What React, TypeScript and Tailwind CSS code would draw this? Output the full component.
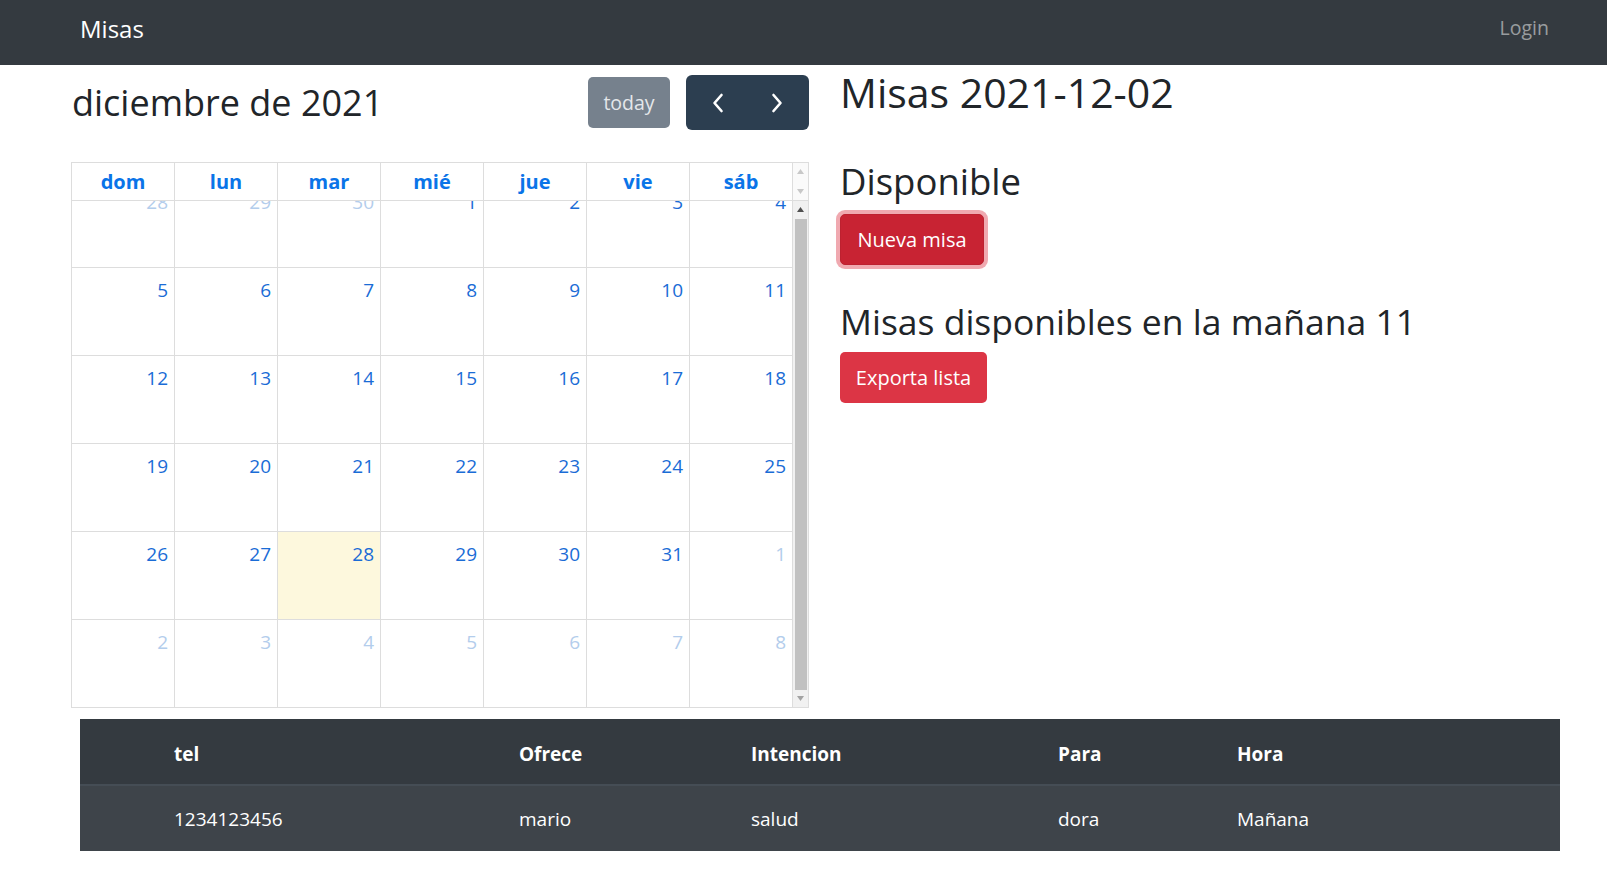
import React from 'react';

type Day = { n: number; other?: boolean; today?: boolean };

const weeks: Day[][] = [
  [{ n: 28, other: true }, { n: 29, other: true }, { n: 30, other: true }, { n: 1 }, { n: 2 }, { n: 3 }, { n: 4 }],
  [{ n: 5 }, { n: 6 }, { n: 7 }, { n: 8 }, { n: 9 }, { n: 10 }, { n: 11 }],
  [{ n: 12 }, { n: 13 }, { n: 14 }, { n: 15 }, { n: 16 }, { n: 17 }, { n: 18 }],
  [{ n: 19 }, { n: 20 }, { n: 21 }, { n: 22 }, { n: 23 }, { n: 24 }, { n: 25 }],
  [{ n: 26 }, { n: 27 }, { n: 28, today: true }, { n: 29 }, { n: 30 }, { n: 31 }, { n: 1, other: true }],
  [{ n: 2, other: true }, { n: 3, other: true }, { n: 4, other: true }, { n: 5, other: true }, { n: 6, other: true }, { n: 7, other: true }, { n: 8, other: true }],
];

const dayNames = ['dom', 'lun', 'mar', 'mié', 'jue', 'vie', 'sáb'];

const rows = [{ tel: '1234123456', ofrece: 'mario', intencion: 'salud', para: 'dora', hora: 'Mañana' }];

function Chevron({ dir }: { dir: 'left' | 'right' }) {
  return (
    <svg width="14" height="22" viewBox="0 0 14 22" fill="none">
      <path
        d={dir === 'left' ? 'M10.5 3 L3.5 11 L10.5 19' : 'M3.5 3 L10.5 11 L3.5 19'}
        stroke="white"
        strokeWidth="2.6"
        strokeLinecap="round"
        strokeLinejoin="round"
      />
    </svg>
  );
}

function Arrow({ up, tone = '#a3a3a3' }: { up?: boolean; tone?: string }) {
  return (
    <svg width="7" height="5" viewBox="0 0 7 5">
      <path d={up ? 'M0 5 L3.5 0 L7 5 Z' : 'M0 0 L3.5 5 L7 0 Z'} fill={tone} />
    </svg>
  );
}

function Calendar() {
  return (
    <div className="w-[738px]">
      <div className="mt-[10px] mb-[32px] flex h-[55px] items-center">
        <h2 className="ml-[1px] text-[36px] leading-none text-[#212529]">diciembre de 2021</h2>
        <div className="ml-auto flex items-center gap-[16px]">
          <button className="h-[51px] w-[82px] rounded-[5px] bg-[#76818d] text-[19.5px] text-[#e4e7ea]">today</button>
          <div className="flex h-[55px] w-[123px] overflow-hidden rounded-[6px] bg-[#2c3e50]">
            <button className="flex flex-1 items-center justify-center pl-[2px]">
              <Chevron dir="left" />
            </button>
            <button className="flex flex-1 items-center justify-center pr-[2px]">
              <Chevron dir="right" />
            </button>
          </div>
        </div>
      </div>

      <div className="border border-[#dddddd]">
        <div className="flex h-[38px] border-b border-[#dddddd]">
          {dayNames.map((d) => (
            <div
              key={d}
              className="flex w-[103px] items-center justify-center border-r border-[#dddddd] text-[20px] font-bold text-[#0a74e8]"
            >
              {d}
            </div>
          ))}
          <div className="flex flex-1 flex-col items-center justify-between bg-[#fafafa] py-[6px]">
            <Arrow up tone="#c8c8c8" />
            <Arrow tone="#c8c8c8" />
          </div>
        </div>

        <div className="flex h-[506px]">
          <div className="w-[721px] overflow-hidden">
            <div className="-mt-[21px]">
              {weeks.map((w, i) => (
                <div key={i} className="flex h-[88px] border-b border-[#dddddd]">
                  {w.map((d, j) => (
                    <div
                      key={j}
                      className={`w-[103px] border-r border-[#dddddd] pr-[6px] pt-[8px] text-right text-[19px] leading-[28px] ${
                        d.today ? 'bg-[#fdf8dd]' : ''
                      } ${d.other ? 'text-[#b3cdec]' : 'text-[#1a6cd6]'}`}
                    >
                      {d.n}
                    </div>
                  ))}
                </div>
              ))}
            </div>
          </div>
          <div className="flex flex-1 flex-col items-center bg-[#f1f1f1]">
            <div className="flex h-[17px] items-center">
              <Arrow up tone="#505050" />
            </div>
            <div className="mt-[1px] w-[12px] flex-1 bg-[#c1c1c1]" />
            <div className="flex h-[17px] items-center">
              <Arrow tone="#a3a3a3" />
            </div>
          </div>
        </div>
      </div>
    </div>
  );
}

export default function App() {
  return (
    <div className="min-h-screen bg-white font-['Open_Sans','Noto_Sans',sans-serif] text-[#212529]">
      <nav className="flex h-[65px] items-start justify-between bg-[#343a40] pl-[80px] pr-[58px] pt-[11px]">
        <span className="text-[24px] leading-[36px] text-white">Misas</span>
        <span className="text-[19.5px] leading-[34px] text-white/50">Login</span>
      </nav>

      <div className="flex pl-[71px]">
        <Calendar />

        <div className="ml-[31px]">
          <h1 className="text-[41px] leading-[54px] font-medium">Misas 2021-12-02</h1>
          <h2 className="mt-[40px] text-[36.5px] leading-[44px] font-medium">Disponible</h2>
          <button className="mt-[11px] h-[51px] w-[144px] rounded-[5px] border border-[#bd2130] bg-[#c82333] text-[20px] text-white shadow-[0_0_0_4px_rgba(225,83,97,0.5)]">
            Nueva misa
          </button>
          <h2 className="mt-[34px] text-[35.5px] leading-[44px] font-medium">Misas disponibles en la mañana 11</h2>
          <button className="mt-[9px] h-[51px] w-[147px] rounded-[5px] bg-[#dc3545] text-[20px] text-white">
            Exporta lista
          </button>
        </div>
      </div>

      <table className="ml-[80px] mt-[11px] w-[1480px] table-fixed border-collapse text-[19px] text-white">
        <colgroup>
          <col className="w-[94px]" />
          <col className="w-[345px]" />
          <col className="w-[232px]" />
          <col className="w-[307px]" />
          <col className="w-[179px]" />
          <col />
        </colgroup>
        <thead>
          <tr className="h-[66px] bg-[#343a40]">
            <th />
            <th className="pt-[5px] text-left font-bold">tel</th>
            <th className="pt-[5px] text-left font-bold">Ofrece</th>
            <th className="pt-[5px] text-left font-bold">Intencion</th>
            <th className="pt-[5px] text-left font-bold">Para</th>
            <th className="pt-[5px] text-left font-bold">Hora</th>
          </tr>
        </thead>
        <tbody>
          {rows.map((r) => (
            <tr key={r.tel} className="h-[66px] border-t-2 border-[#454d55] bg-[#3e444a]">
              <td />
              <td className="pt-[2px]">{r.tel}</td>
              <td className="pt-[2px]">{r.ofrece}</td>
              <td className="pt-[2px]">{r.intencion}</td>
              <td className="pt-[2px]">{r.para}</td>
              <td className="pt-[2px]">{r.hora}</td>
            </tr>
          ))}
        </tbody>
      </table>
    </div>
  );
}
